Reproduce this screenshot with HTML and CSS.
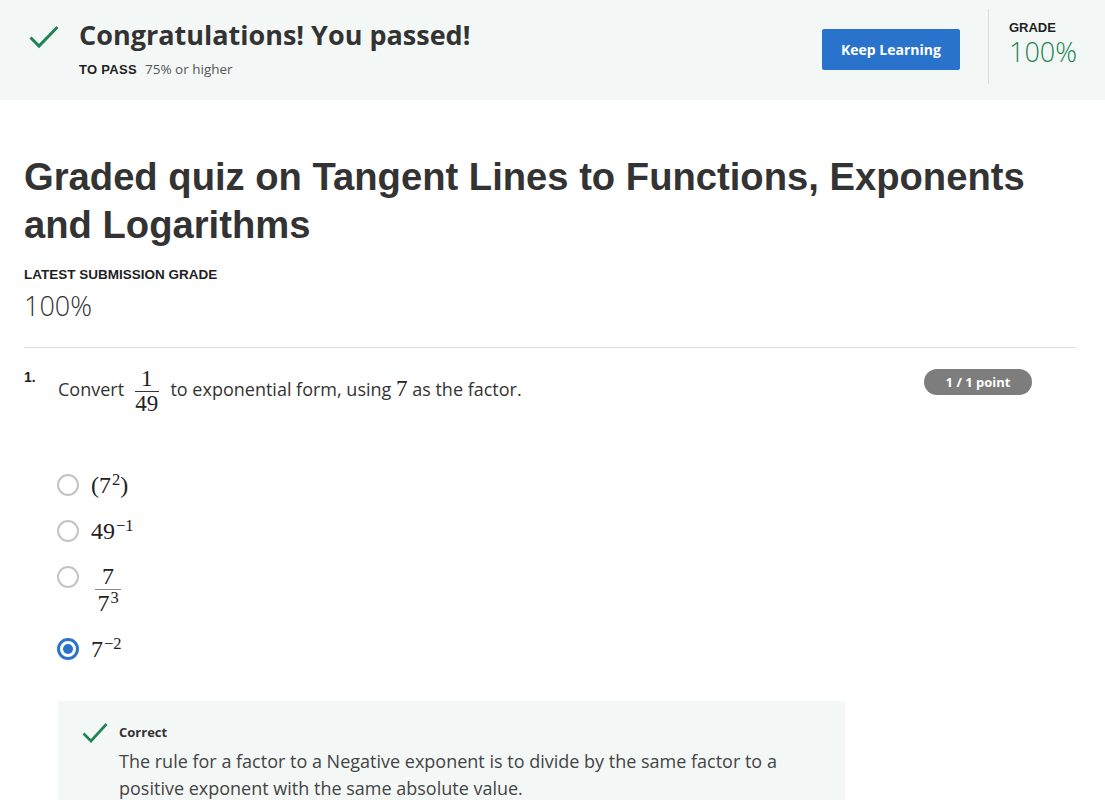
FILE: index.html
```html
<!DOCTYPE html>
<html lang="en">
<head>
<meta charset="utf-8">
<title>Graded quiz on Tangent Lines to Functions, Exponents and Logarithms</title>
<link rel="stylesheet" href="styles.css">
</head>
<body>
<header class="banner">
  <div class="banner-left">
    <svg class="pass-check" width="30" height="24" viewBox="0 0 30 24" aria-hidden="true">
      <polyline points="1.5,12.5 10,21 28.5,2" fill="none" stroke="#1f8354" stroke-width="3"/>
    </svg>
    <div class="pass-text">
      <h2 class="pass-title">Congratulations! You passed!</h2>
      <div class="pass-req"><span class="req-label">TO PASS</span><span class="req-value">75% or higher</span></div>
    </div>
  </div>
  <div class="banner-right">
    <button class="btn-primary" type="button">Keep Learning</button>
    <div class="vdivider"></div>
    <div class="grade-box">
      <div class="grade-label">GRADE</div>
      <div class="grade-value">100%</div>
    </div>
  </div>
</header>

<main class="content">
  <h1 class="quiz-title">Graded quiz on Tangent Lines to Functions, Exponents and Logarithms</h1>
  <div class="sub-label">LATEST SUBMISSION GRADE</div>
  <div class="sub-value">100%</div>
  <hr class="rule">

  <section class="question">
    <div class="q-num">1.</div>
    <div class="q-body">
      <div class="q-text">Convert <span class="frac q-frac"><span class="num">1</span><span class="den">49</span></span> to exponential form, using <span class="math q-math">7</span> as the factor.</div>
    </div>
    <div class="points">1 / 1 point</div>
  </section>

  <ul class="options">
    <li class="option">
      <span class="radio"></span>
      <span class="math opt-math">(7<sup>2</sup>)</span>
    </li>
    <li class="option">
      <span class="radio"></span>
      <span class="math opt-math">49<sup>−1</sup></span>
    </li>
    <li class="option">
      <span class="radio"></span>
      <span class="frac opt-frac"><span class="num">7</span><span class="den">7<sup>3</sup></span></span>
    </li>
    <li class="option">
      <span class="radio radio-on"></span>
      <span class="math opt-math">7<sup>−2</sup></span>
    </li>
  </ul>

  <div class="feedback">
    <svg class="fb-check" width="26" height="22" viewBox="0 0 26 22" aria-hidden="true">
      <polyline points="1.5,11.5 9,19 24.5,2" fill="none" stroke="#1f8354" stroke-width="2.6"/>
    </svg>
    <div class="fb-body">
      <div class="fb-title">Correct</div>
      <p class="fb-text">The rule for a factor to a Negative exponent is to divide by the same factor to a positive exponent with the same absolute value.</p>
    </div>
  </div>
</main>
</body>
</html>
```

FILE: styles.css
```css
* { box-sizing: border-box; }

html, body {
  margin: 0;
  padding: 0;
  background: #ffffff;
  color: #333333;
  font-family: "Open Sans", "Liberation Sans", Arial, sans-serif;
}

/* ---------- banner ---------- */
.banner {
  height: 100px;
  background: #f3f8f6;
  display: flex;
  justify-content: space-between;
  align-items: flex-start;
  padding: 0 28px 0 29px;
}

.banner-left {
  display: flex;
  align-items: flex-start;
  padding-top: 18px;
}

.pass-check {
  margin-top: 7px;
  margin-right: 20px;
  flex: none;
}

.pass-title {
  margin: 0;
  font-size: 27px;
  line-height: 34px;
  font-weight: 700;
  color: #333333;
}

.pass-req {
  margin-top: 8px;
  line-height: 18px;
  display: flex;
  align-items: baseline;
}

.req-label {
  font-family: "Liberation Sans", Arial, sans-serif;
  font-weight: 700;
  font-size: 13px;
  letter-spacing: 0.3px;
  color: #1f1f1f;
  margin-right: 8px;
}

.req-value {
  font-size: 13.5px;
  color: #555555;
}

.banner-right {
  display: flex;
  align-items: flex-start;
}

.btn-primary {
  margin-top: 29px;
  margin-right: 28px;
  width: 138px;
  height: 41px;
  border: 0;
  border-radius: 2px;
  background: #2a73cc;
  color: #ffffff;
  font-family: "Open Sans", sans-serif;
  font-size: 14px;
  font-weight: 700;
  padding: 0;
}

.vdivider {
  margin-top: 9px;
  width: 1px;
  height: 75px;
  background: #dcdcdc;
}

.grade-box {
  padding-top: 20px;
  padding-left: 20px;
}

.grade-label {
  font-family: "Liberation Sans", Arial, sans-serif;
  font-size: 13px;
  font-weight: 700;
  line-height: 16px;
  color: #1f1f1f;
}

.grade-value {
  margin-top: 1px;
  font-size: 27px;
  font-weight: 300;
  line-height: 30px;
  color: #1f8354;
}

/* ---------- content ---------- */
.content {
  padding: 0 28px 0 24px;
}

.quiz-title {
  margin: 53px 0 0;
  font-family: "Liberation Sans", Arial, sans-serif;
  font-size: 38.2px;
  line-height: 48px;
  font-weight: 700;
  color: #333333;
}

.sub-label {
  margin-top: 18px;
  font-family: "Liberation Sans", Arial, sans-serif;
  font-size: 13.5px;
  line-height: 16px;
  font-weight: 700;
  color: #1f1f1f;
}

.sub-value {
  margin-top: 6px;
  font-size: 27px;
  font-weight: 300;
  line-height: 34px;
  color: #333333;
}

.rule {
  margin: 24px 0 0;
  border: 0;
  border-top: 1px solid #e1e1e1;
  height: 0;
}

/* ---------- question ---------- */
.question {
  margin-top: 18px;
  display: flex;
  align-items: flex-start;
}

.q-num {
  width: 34px;
  flex: none;
  margin-top: 1px;
  font-family: "Liberation Sans", Arial, sans-serif;
  font-weight: 700;
  font-size: 14px;
  line-height: 20px;
  color: #1f1f1f;
}

.q-body {
  flex: 1;
}

.q-text {
  font-size: 18px;
  line-height: 27px;
  color: #333333;
}

.math {
  font-family: "Liberation Serif", "Times New Roman", serif;
  font-size: 24px;
  color: #222222;
}

.q-math {
  font-size: 23px;
}

.frac {
  display: inline-flex;
  flex-direction: column;
  align-items: center;
  vertical-align: middle;
  font-family: "Liberation Serif", "Times New Roman", serif;
  font-size: 23px;
  color: #222222;
}

.frac .num {
  display: block;
  width: 100%;
  text-align: center;
}

.frac .den {
  display: block;
}

.q-frac {
  margin: 0 7px 0 6px;
  width: 24px;
}

.q-frac .num {
  line-height: 25px;
  border-bottom: 1.5px solid #333333;
}

.q-frac .den {
  line-height: 24px;
}

.points {
  flex: none;
  margin-top: 3px;
  margin-right: 45px;
  width: 108px;
  height: 26px;
  border-radius: 13px;
  background: #7d7d7d;
  color: #ffffff;
  font-size: 13px;
  font-weight: 700;
  line-height: 26px;
  text-align: center;
}

/* ---------- options ---------- */
.options {
  list-style: none;
  margin: 56px 0 0;
  padding: 0 0 0 33px;
  display: flex;
  flex-direction: column;
  gap: 20px;
}

.option {
  display: flex;
  align-items: flex-start;
  gap: 12px;
}

.radio {
  flex: none;
  margin-top: 2px;
  width: 22px;
  height: 22px;
  border: 2px solid #c4c4c4;
  border-radius: 50%;
  background: #ffffff;
  display: flex;
  align-items: center;
  justify-content: center;
}

.radio-on {
  border: 3px solid #2a73cc;
}

.radio-on::after {
  content: "";
  width: 10px;
  height: 10px;
  border-radius: 50%;
  background: #2a73cc;
}

.opt-math {
  line-height: 26px;
}

.math sup,
.frac sup {
  font-size: 16.5px;
  vertical-align: 0.5em;
  line-height: 0;
  margin-left: 1px;
}

.opt-frac {
  width: 26px;
  margin-left: 4px;
  font-size: 24px;
}

.opt-frac .num {
  line-height: 25px;
  border-bottom: 1.5px solid #8a8a8a;
}

.opt-frac .den {
  line-height: 26px;
}

/* ---------- feedback ---------- */
.feedback {
  margin: 39px 0 0 34px;
  width: 787px;
  background: #f3f8f6;
  padding: 21px 24px 14px 24px;
  display: flex;
  align-items: flex-start;
}

.fb-check {
  flex: none;
  margin-right: 11px;
}

.fb-title {
  font-size: 13px;
  font-weight: 700;
  line-height: 20px;
  color: #333333;
}

.fb-text {
  margin: 6px 0 0;
  font-size: 18px;
  line-height: 27px;
  color: #444444;
}
```
